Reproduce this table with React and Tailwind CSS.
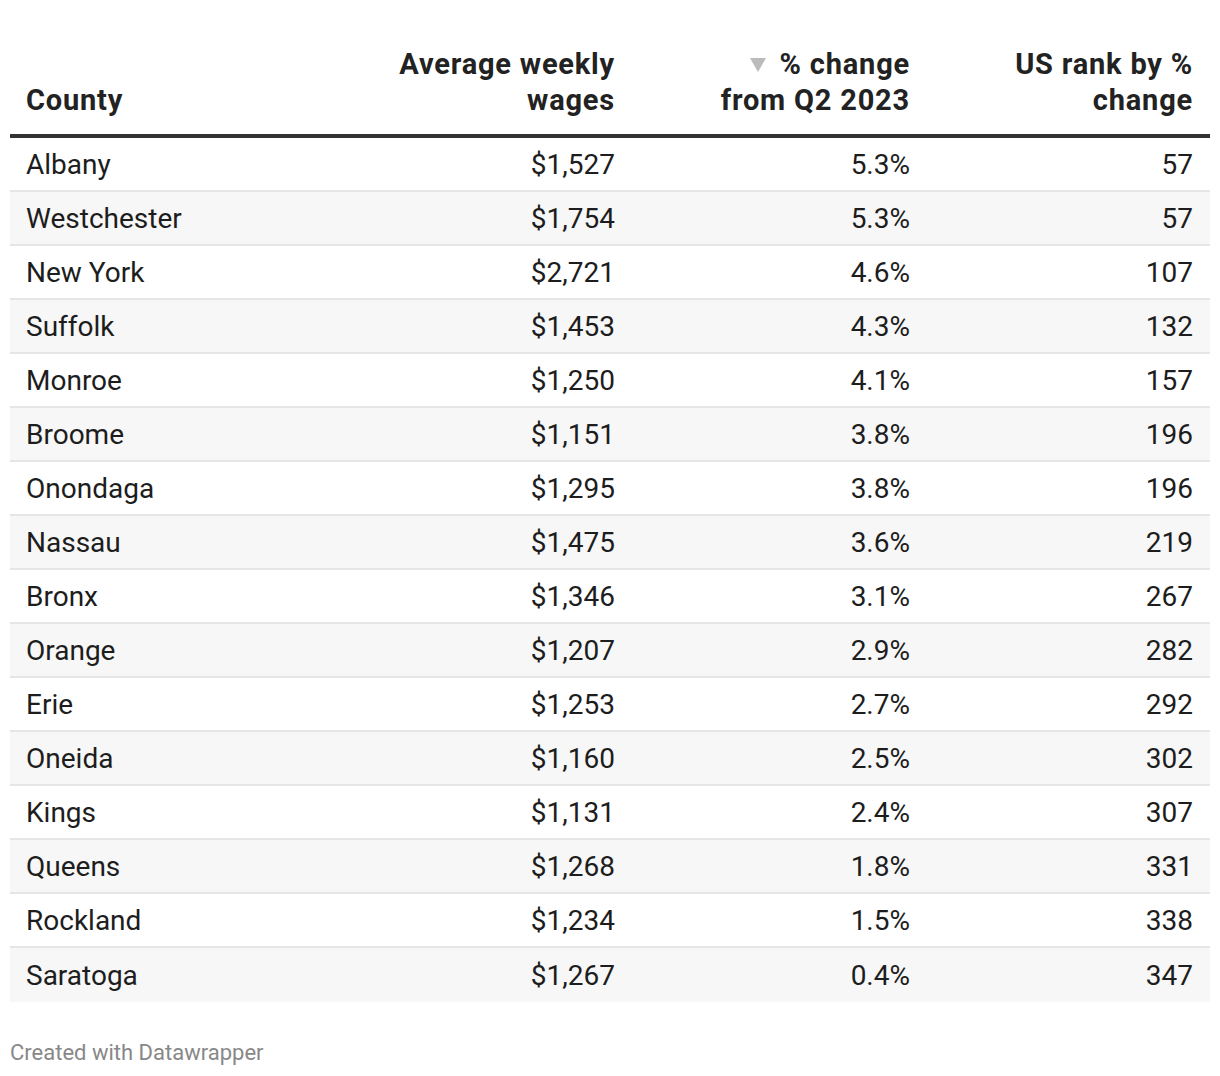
const rows = [
  ["Albany", "$1,527", "5.3%", "57"],
  ["Westchester", "$1,754", "5.3%", "57"],
  ["New York", "$2,721", "4.6%", "107"],
  ["Suffolk", "$1,453", "4.3%", "132"],
  ["Monroe", "$1,250", "4.1%", "157"],
  ["Broome", "$1,151", "3.8%", "196"],
  ["Onondaga", "$1,295", "3.8%", "196"],
  ["Nassau", "$1,475", "3.6%", "219"],
  ["Bronx", "$1,346", "3.1%", "267"],
  ["Orange", "$1,207", "2.9%", "282"],
  ["Erie", "$1,253", "2.7%", "292"],
  ["Oneida", "$1,160", "2.5%", "302"],
  ["Kings", "$1,131", "2.4%", "307"],
  ["Queens", "$1,268", "1.8%", "331"],
  ["Rockland", "$1,234", "1.5%", "338"],
  ["Saratoga", "$1,267", "0.4%", "347"],
];

const cols = "grid grid-cols-[370px_235px_295px_283px_17px]";

export default function App() {
  return (
    <div className="min-h-[1076px] bg-white px-[10px] pt-[46px] text-[#1d1d1d]" style={{ fontFamily: "Roboto, 'Liberation Sans', sans-serif" }}>
      <div className={`${cols} items-end whitespace-nowrap border-b-4 border-[#333] pb-[16px] text-[29px] font-bold leading-[36px] tracking-[0.8px] text-[#222]`}>
        <div className="pl-[16px]">County</div>
        <div className="text-right">Average weekly<br />wages</div>
        <div className="text-right">
          <svg className="mr-[14px] inline-block align-[2px]" width="16" height="14" viewBox="0 0 16 14">
            <path d="M0 0H16L8 14Z" fill="#bbbbbb" />
          </svg>
          % change<br />from Q2 2023
        </div>
        <div className="text-right">US rank by %<br />change</div>
        <div />
      </div>
      {rows.map((r, i) => (
        <div
          key={r[0]}
          className={`${cols} h-[54px] items-center pt-[2px] text-[28px] ${i % 2 ? "bg-[#f7f7f7]" : "bg-white"} ${i < rows.length - 1 ? "border-b-2 border-[#e6e6e6]" : ""}`}
        >
          <div className="pl-[16px]">{r[0]}</div>
          <div className="text-right">{r[1]}</div>
          <div className="text-right">{r[2]}</div>
          <div className="text-right">{r[3]}</div>
          <div />
        </div>
      ))}
      <div className="mt-[34px] text-[22px] text-[#888]">Created with Datawrapper</div>
    </div>
  );
}
